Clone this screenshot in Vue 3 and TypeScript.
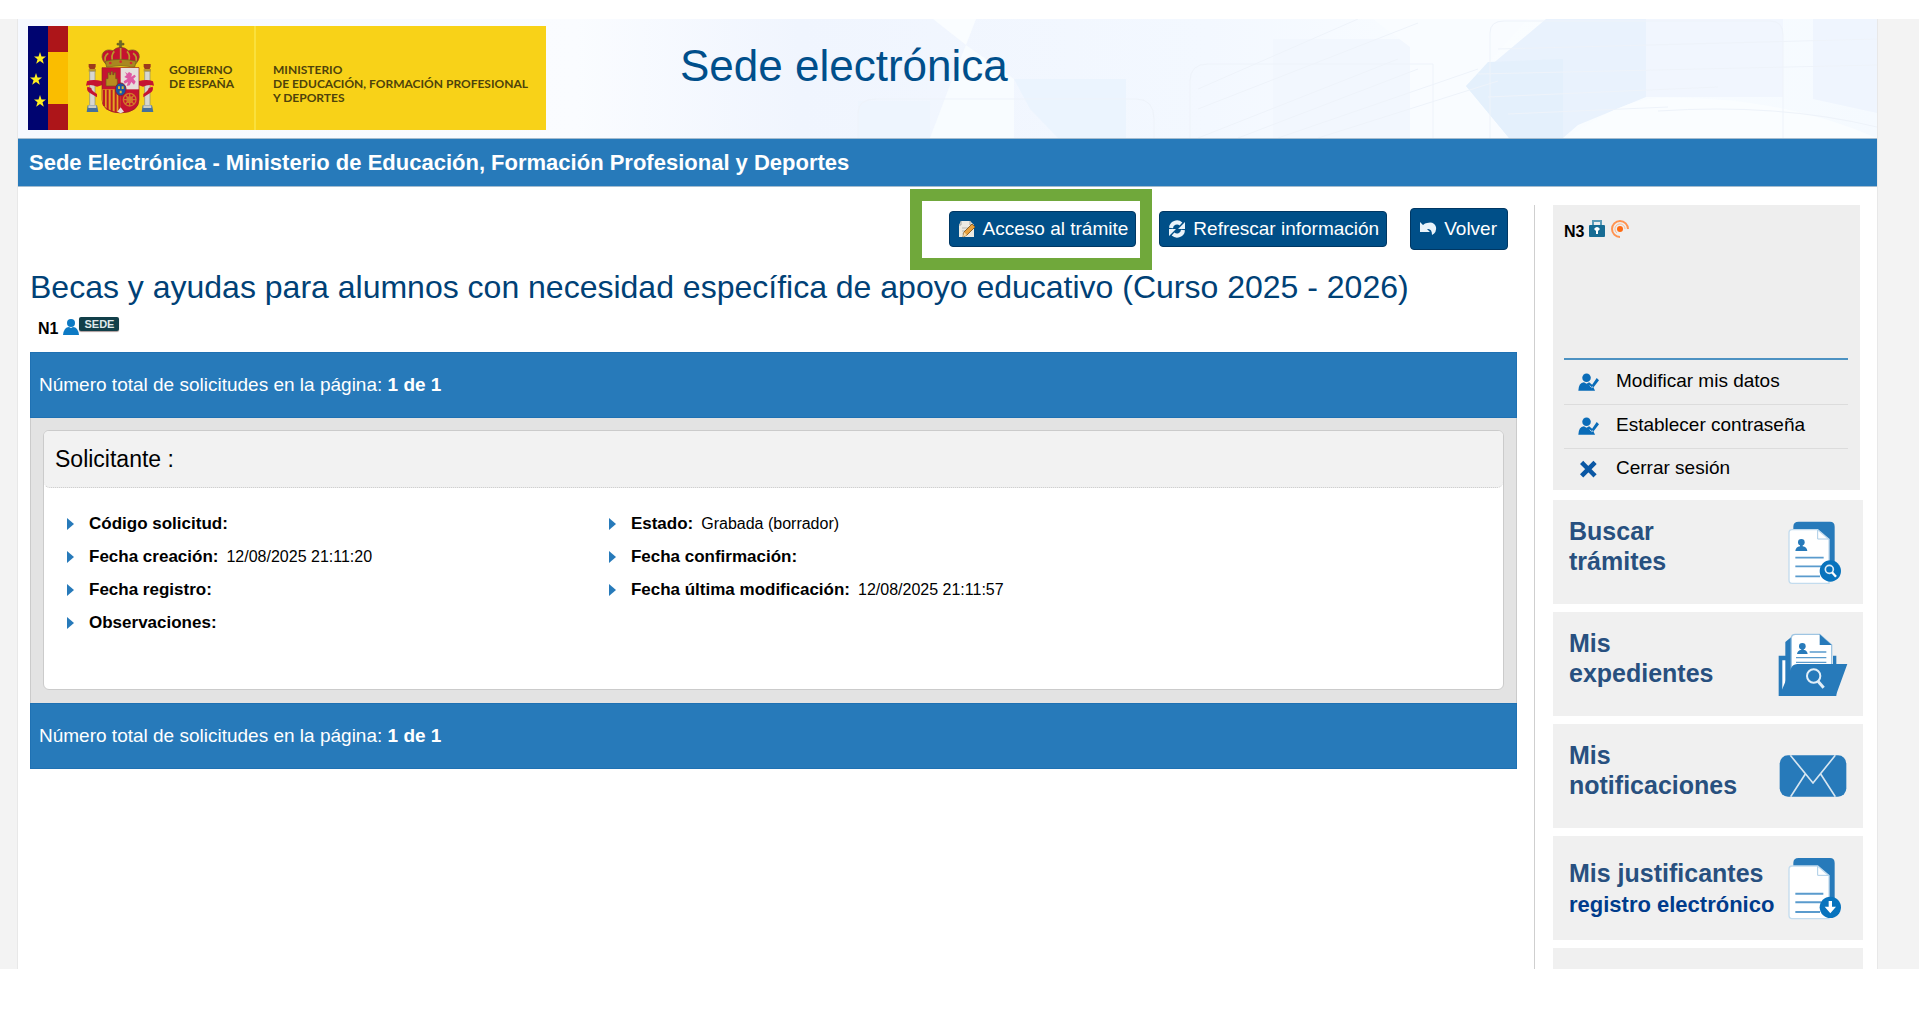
<script setup lang="ts">
interface Field {
  label: string
  value?: string
}

const leftFields: Field[] = [
  { label: 'Código solicitud:' },
  { label: 'Fecha creación:', value: '12/08/2025 21:11:20' },
  { label: 'Fecha registro:' },
  { label: 'Observaciones:' },
]

const rightFields: Field[] = [
  { label: 'Estado:', value: 'Grabada (borrador)' },
  { label: 'Fecha confirmación:' },
  { label: 'Fecha última modificación:', value: '12/08/2025 21:11:57' },
]

const columns: Field[][] = [leftFields, rightFields]

const account = [
  { text: 'Modificar mis datos', icon: 'user' },
  { text: 'Establecer contraseña', icon: 'user' },
  { text: 'Cerrar sesión', icon: 'close' },
]

const page = 1
const pages = 1
</script>

<template>
  <div class="page">
    <div class="backdrop">
      <div class="shell">
        <header class="banner">
          <svg class="banner-art" viewBox="0 0 1859 119" preserveAspectRatio="none" aria-hidden="true">
            <defs>
              <linearGradient id="wash" x1="0" x2="1" y1="0" y2="0">
                <stop offset="0" stop-color="#f6f9ff" />
                <stop offset="0.3" stop-color="#fafcff" />
                <stop offset="0.42" stop-color="#f0f5fe" />
                <stop offset="0.64" stop-color="#f3f8ff" />
                <stop offset="0.8" stop-color="#fafdff" />
                <stop offset="1" stop-color="#f5faff" />
              </linearGradient>
            </defs>
            <rect width="1859" height="119" fill="url(#wash)" />
            <path d="M915 0H958L948 26Z" fill="#fafdff" />
            <path d="M948 26L996 60V119H912L932 66Z" fill="#f8fcff" />
            <path d="M996 60H1108V119H1040L1012 90Z" fill="#ebf4fe" />
            <path d="M840 82H912V119H840Z" fill="#eef5fe" />
            <path d="M1255 20H1392V119H1255Z" fill="#f2f7fe" />
            <path d="M1355 0H1510L1448 68L1490 119H1392V28Z" fill="#f9fcff" />
            <path d="M1528 0H1628V78L1560 106L1545 119H1491L1448 67Z" fill="#e9f2fd" />
            <path d="M1448 67L1470 43L1545 40V119H1491Z" fill="#e4f0fc" />
            <path d="M1628 0H1765V78H1628Z" fill="#f1f6fe" />
            <path d="M1550 119Q1600 82 1640 79Q1760 76 1859 119Z" fill="#fafdff" />
            <path d="M1795 0H1859V94L1795 80Z" fill="#eff5fe" />
            <g fill="none" stroke="#eef3fa">
              <path d="M840 119V94Q840 80 858 80H1118Q1136 80 1136 100V119" />
              <path d="M1172 119V62Q1172 45 1190 45H1415V119" />
              <path d="M1472 119V14Q1472 2 1486 2H1752Q1765 2 1765 16V119" />
              <path d="M1180 119L1380 40M1220 119L1400 50M1260 119L1460 50M1300 119L1480 62M1180 90L1400 4M1180 70L1340 0" />
              <path d="M1480 30L1859 20M1460 55L1859 46M1470 78L1700 68M1490 95L1650 88M1640 92Q1760 84 1859 108" />
            </g>
          </svg>

          <div class="logo">
            <svg class="flags" viewBox="0 0 40 104" role="img" aria-label="Unión Europea y España">
              <rect width="20" height="104" fill="#000470" />
              <rect x="20" width="20" height="104" fill="#ad1519" />
              <rect x="20" y="26" width="20" height="52" fill="#fabd00" />
              <g fill="#ffef20">
                <path id="star" d="M12 26L13.500 30.500H18L14.500 33.300L15.800 37.800L12 35L8.200 37.800L9.500 33.300L6 30.500H10.500Z" />
                <use href="#star" x="-4" y="21" />
                <use href="#star" y="43" />
              </g>
            </svg>
            <div class="government">
              <svg class="arms" viewBox="28 26 207 222" role="img" aria-label="Escudo de España">
                <g stroke="#6d5a1c" stroke-width="2">
                  <path d="M131 28h7v8h7v5h-7v9h-7v-9h-7v-5h7Z" fill="#6a6a2c" />
                  <path d="M88 96Q72 76 84 62Q94 52 112 58Q122 48 135 48Q148 48 158 58Q176 52 186 62Q198 76 182 96Z" fill="#c4122f" />
                  <path d="M90 94Q84 74 98 66M112 92Q104 72 116 60M158 92Q166 72 154 60M180 94Q186 74 172 66M135 92V50" fill="none" stroke="#b8982c" stroke-width="5" />
                  <path d="M88 90Q135 78 182 90L177 107Q135 99 93 107Z" fill="#a88720" />
                </g>
                <g fill="#d8282f"><circle cx="104" cy="95" r="4" /><circle cx="135" cy="91" r="4" /><circle cx="166" cy="95" r="4" /></g>
                <g id="pillar">
                  <path d="M39 98h21v8l-3 7H42l-3-7Z" fill="#9c3b1c" />
                  <path d="M39 113h22v8H39Z" fill="#b9982d" />
                  <path d="M42 120h16v104H42Z" fill="#d7d7d0" stroke="#8d8b72" stroke-width="2" />
                  <path d="M36 222h28l4 20H33Z" fill="#46709c" />
                  <path d="M38 222h24v8H38Z" fill="#ccccc4" />
                </g>
                <use href="#pillar" x="165" />
                <path d="M80 150Q52 142 34 150L31 163Q48 158 64 166L82 160ZM35 166Q31 178 44 186L64 198V188Q46 178 47 170Z" fill="#c51331" />
                <path d="M187 150Q215 142 232 150L235 163Q218 158 202 166L186 160ZM231 166Q235 178 222 186L203 198V188Q219 178 219 170Z" fill="#c51331" />
                <path d="M79 109H190V205Q190 242 135 245Q79 242 79 205Z" fill="#c51331" stroke="#8a2922" stroke-width="2" />
                <path d="M135 110H189V174H135Z" fill="#e6dfdc" />
                <path d="M80 174H134V243Q80 238 80 205Z" fill="#e3a521" />
                <path d="M85 175V224M96 175V235M108 175V240M120 175V243M131 175V244" stroke="#bd1c24" stroke-width="6" />
                <path d="M91 164V142h6v-18h5v6h4v-9h5v9h4v-6h5v18h5v22Z" fill="#b98c1e" stroke="#70571c" stroke-width="2" />
                <path d="M148 121l7 6 5-5 9 5-2 10 9-7 5 5-8 7 7 9-5 9-8-8-5 10-9 2 4-12-10 5-3-7 12-8-10-5 7-6Z" fill="#df58a1" />
                <g fill="none" stroke="#d17a28" stroke-width="4">
                  <circle cx="162" cy="205" r="19" />
                  <circle cx="162" cy="205" r="8" />
                  <path d="M143 205h38M162 186v38M149 192l26 26M175 192l-26 26" />
                </g>
                <path d="M125 241l10-13 10 13-10 5Z" fill="#e7dedc" />
                <ellipse cx="135" cy="174" rx="16" ry="19" fill="#1a55a3" stroke="#8d1f30" stroke-width="3" />
                <path d="M127 165h6v8h-6ZM138 165h6v8h-6ZM132 178h6v8h-6Z" fill="#d6ba37" />
              </svg>
              <span>GOBIERNO<br />DE ESPAÑA</span>
            </div>
            <div class="ministry">MINISTERIO<br />DE EDUCACIÓN, FORMACIÓN PROFESIONAL<br />Y DEPORTES</div>
          </div>
          <div class="site-title">Sede electrónica</div>
        </header>

        <div class="site-bar">Sede Electrónica - Ministerio de Educación, Formación Profesional y Deportes</div>

        <div class="content">
          <main>
            <div class="toolbar">
              <div class="highlighted">
                <button type="button">
                  <svg viewBox="0 0 18 18" aria-hidden="true">
                    <path d="M3 1h9l4 4v12H1V5Z" fill="#eceae2" />
                    <path d="M3 1v4H1M12 1v4h4" fill="none" stroke="#a8a9a2" />
                    <path d="M4 8h6M4 11h4M4 14h3" stroke="#b7b8b2" />
                    <path d="M14 4l3 3-8 8-4 2 1-5Z" fill="#e9a13b" stroke="#8f6428" stroke-width="1" />
                    <path d="M6 12l3 3-4 2Z" fill="#f6d9a7" />
                  </svg>
                  Acceso al trámite
                </button>
              </div>
              <button type="button">
                <svg viewBox="0 0 18 18" aria-hidden="true">
                  <path d="M3 8A6 6 0 0 1 13 4M15 10A6 6 0 0 1 5 14" fill="none" stroke="#e9f3fa" stroke-width="4" />
                  <path d="M17 2v7h-7ZM1 16V9h7Z" fill="#e9f3fa" />
                </svg>
                Refrescar información
              </button>
              <button type="button" class="back">
                <svg viewBox="0 0 18 18" aria-hidden="true">
                  <path d="M1 2v10h10L8 9Q13 8 13 15Q18 12 17 7Q15 1 8 3Q6 3 4 5Z" fill="#e9f3fa" />
                </svg>
                Volver
              </button>
            </div>

            <h1>Becas y ayudas para alumnos con necesidad específica de apoyo educativo (Curso 2025 - 2026)</h1>
            <div class="access">
              <span class="level">N1</span>
              <svg viewBox="0 0 16 17" aria-hidden="true">
                <circle cx="8" cy="5" r="4" fill="#0d7ac4" />
                <path d="M0 17Q1 9 6 9L8 10L10 9Q15 9 16 17Z" fill="#0d7ac4" />
              </svg>
              <span class="badge">SEDE</span>
            </div>

            <div class="count">Número total de solicitudes en la página: <b>{{ page }} de {{ pages }}</b></div>
            <div class="panel">
              <section class="card">
                <h2>Solicitante :</h2>
                <div class="fields">
                  <ul v-for="(column, i) in columns" :key="i">
                    <li v-for="field in column" :key="field.label">
                      <b>{{ field.label }}</b>
                      <span v-if="field.value">{{ field.value }}</span>
                    </li>
                  </ul>
                </div>
              </section>
            </div>
            <div class="count">Número total de solicitudes en la página: <b>{{ page }} de {{ pages }}</b></div>
          </main>

          <aside>
            <div class="account">
              <div class="session">
                <span class="level">N3</span>
                <svg class="lock" viewBox="0 0 16 17" aria-hidden="true">
                  <path d="M4 7V1h8v6" fill="none" stroke="#5c9cb8" stroke-width="2" />
                  <rect y="5" width="16" height="12" rx="1" fill="#176c94" />
                  <path d="M5 9Q8 5 11 9L9 11V14H7V11Z" fill="#fff" />
                </svg>
                <svg class="signal" viewBox="0 0 18 18" aria-hidden="true">
                  <path d="M9 17A8 8 0 1 1 17 9" fill="none" stroke="#ff9350" stroke-width="2" />
                  <path d="M6 13A5 5 0 1 1 14 9" fill="none" stroke="#ffb88a" />
                  <circle cx="9" cy="9" r="3" fill="#ff6a10" />
                </svg>
              </div>
              <nav aria-label="Mi cuenta">
                <a v-for="item in account" :key="item.text" href="#">
                  <svg v-if="item.icon === 'user'" viewBox="234 548 64 54" aria-hidden="true">
                    <circle cx="260" cy="562" r="13" fill="#0a6cb8" />
                    <path d="M235 602Q236 577 252 576L260 580L268 576L277 583L291 563L298 570L281 592L286 602Z" fill="#0a6cb8" />
                    <path d="M270 586l6 6 4-3" fill="none" stroke="#d3e5f2" stroke-width="3" />
                  </svg>
                  <svg v-else viewBox="234 810 64 54" aria-hidden="true">
                    <path d="M250 822L281 853M281 822L250 853" stroke="#0a57a4" stroke-width="14" stroke-linecap="square" />
                  </svg>
                  {{ item.text }}
                </a>
              </nav>
            </div>

            <a class="tile" href="#">
              <span>Buscar<br />trámites</span>
              <svg class="doc" viewBox="864 123 162 192" aria-hidden="true">
                <path d="M880 150V140Q880 125 896 125H990Q1004 125 1004 140V280H960V160Z" fill="#277aba" />
                <path d="M876 149H953L987 178V310H876Q867 310 867 300V159Q867 149 876 149Z" fill="#fff" stroke="#c3dcee" stroke-width="4" />
                <path d="M953 150V177H986" fill="none" stroke="#aacce6" stroke-width="3" />
                <circle cx="904" cy="187" r="10" fill="#277aba" />
                <path d="M886 213Q887 201 900 199V193H908V199Q921 201 922 213Z" fill="#277aba" />
                <path d="M886 233H971M886 259H964M886 289H960" stroke="#5a9bcd" stroke-width="5" />
                <circle cx="991" cy="273" r="32" fill="#0873bd" />
                <circle cx="988" cy="268" r="12" fill="none" stroke="#dcecf7" stroke-width="5" />
                <path d="M996 277L1008 290" stroke="#fff" stroke-width="7" />
              </svg>
            </a>
            <a class="tile" href="#">
              <span>Mis<br />expedientes</span>
              <svg class="folder" viewBox="835 457 210 192" aria-hidden="true">
                <path d="M837 525H857V484L876 468V560H1000V525H1010V646H837Z" fill="#277aba" />
                <path d="M848 539H857V612L848 632Z" fill="#fff" />
                <path d="M875 566V472Q875 461 888 461H960L996 493V558H880Z" fill="#fff" stroke="#9fc5e2" stroke-width="4" />
                <path d="M960 461L996 493H960Z" fill="#277aba" />
                <circle cx="908" cy="497" r="10" fill="#277aba" />
                <path d="M892 520Q893 509 905 507V502H912V507Q923 509 924 520Z" fill="#277aba" />
                <path d="M930 514H980M889 531H980M889 545H980" stroke="#5a9bcd" stroke-width="4" />
                <path d="M893 550H1043L1008 646H839L872 568Q877 550 893 550Z" fill="#277aba" />
                <circle cx="942" cy="586" r="20" fill="none" stroke="#e3eff8" stroke-width="6" />
                <path d="M955 602L972 621" stroke="#e3eff8" stroke-width="9" />
              </svg>
            </a>
            <a class="tile" href="#">
              <span>Mis<br />notificaciones</span>
              <svg class="mail" viewBox="836 106 202 126" aria-hidden="true">
                <rect x="837" y="107" width="200" height="124" rx="25" fill="#277aba" />
                <path d="M869 107L937 190L1004 107M914 163L870 231M960 163L1004 231" fill="none" stroke="#d7e6f1" stroke-width="5" />
              </svg>
            </a>
            <a class="tile receipts" href="#">
              <span>Mis justificantes<br /><small>registro electrónico</small></span>
              <svg class="doc" viewBox="864 416 162 192" aria-hidden="true">
                <path d="M880 444V434Q880 419 896 419H990Q1004 419 1004 434V570H960V454Z" fill="#277aba" />
                <path d="M876 443H953L987 472V601H876Q867 601 867 591V453Q867 443 876 443Z" fill="#fff" stroke="#c3dcee" stroke-width="4" />
                <path d="M953 444V471H986" fill="none" stroke="#aacce6" stroke-width="3" />
                <path d="M886 526H970M886 552H964M886 581H960" stroke="#5a9bcd" stroke-width="6" />
                <circle cx="991" cy="567" r="32" fill="#0873bd" />
                <path d="M986 548H996V565H1008L991 585L974 565H986Z" fill="#fff" />
              </svg>
            </a>
            <div class="tile"></div>
          </aside>
        </div>
      </div>
    </div>
  </div>
</template>

<style>
body {
  margin: 0;
  background: #fff;
}
</style>

<style scoped>
.page {
  box-sizing: border-box;
  height: 100vh;
  padding: 19px 0 48px;
  font-family: Arial, "Liberation Sans", sans-serif;
  font-size: 19px;
  color: #000;
}

.page *,
.page *::before {
  box-sizing: border-box;
}

.backdrop {
  height: 100%;
  overflow: hidden;
  padding: 0 41px 0 17px;
  background: #f3f3f3;
}

.shell {
  min-height: 100%;
  border: solid #e8e8e8;
  border-width: 0 1px;
  background: #fff;
}

.banner {
  position: relative;
  display: flex;
  align-items: flex-start;
  height: 119px;
  padding: 7px 10px 0;
}

.banner-art {
  position: absolute;
  inset: 0;
  width: 100%;
  height: 100%;
}

.logo {
  position: relative;
  display: flex;
  flex: none;
  width: 518px;
  height: 104px;
  background: #f8d218;
  font-family: Lato, sans-serif;
  font-size: 12px;
  font-weight: 700;
  line-height: 14px;
  color: #4e430b;
  white-space: nowrap;
}

.flags {
  width: 40px;
  height: 104px;
}

.government {
  display: flex;
  align-items: flex-start;
  gap: 15px;
  width: 188px;
  padding: 14px 0 0 17px;
  border-right: 2px solid #fae03c;
}

.government span {
  padding-top: 23px;
}

.arms {
  width: 69px;
  height: 74px;
}

.ministry {
  padding: 37px 0 0 17px;
}

.site-title {
  position: relative;
  margin-left: 134px;
  padding-top: 15px;
  font-size: 44px;
  line-height: 50px;
  color: #004f8b;
}

.site-bar {
  height: 49px;
  padding-left: 11px;
  border: solid #a4bccf;
  border-width: 1px 0;
  background: #277aba;
  font-size: 22px;
  font-weight: 700;
  line-height: 47px;
  color: #fff;
}

.content {
  display: flex;
  padding: 0 14px 0 12px;
}

main {
  flex: 1;
  min-width: 0;
}

.toolbar {
  display: flex;
  align-items: center;
  justify-content: flex-end;
  gap: 23px;
  padding: 21px 9px 0 0;
}

button {
  display: flex;
  align-items: center;
  gap: 7px;
  height: 36px;
  padding: 0 7px 0 8px;
  border: 1px solid #003763;
  border-radius: 4px;
  background: #004f88;
  font-family: inherit;
  font-size: 19px;
  line-height: 24px;
  color: #fff;
  white-space: nowrap;
}

button svg {
  width: 18px;
  height: 18px;
}

.back {
  height: 42px;
  padding-right: 10px;
}

.highlighted {
  position: relative;
}

.highlighted::before {
  content: "";
  position: absolute;
  inset: -22px -16px -23px -39px;
  border: 12px solid #70a83b;
  pointer-events: none;
}

h1 {
  margin: 17px 0 0;
  font-size: 32px;
  font-weight: 400;
  line-height: 40px;
  color: #004176;
}

.access {
  display: flex;
  align-items: flex-start;
  height: 18px;
  margin: 10px 0 17px;
  padding-left: 8px;
}

.level {
  margin-right: 5px;
  font-size: 16px;
  font-weight: 700;
  line-height: 24px;
}

.access svg {
  width: 16px;
  height: 17px;
  margin-top: 1px;
}

.badge {
  height: 14px;
  padding: 0 5px;
  border-radius: 2px;
  background: #123f49;
  font-size: 11px;
  font-weight: 700;
  line-height: 14px;
  color: #dfe8ea;
  box-shadow: 0 1px 1px #a99;
}

.count {
  height: 66px;
  padding-left: 8px;
  border: 1px solid #1f71b3;
  background: #277aba;
  line-height: 64px;
  color: #fff;
}

.panel {
  padding: 12px 12px 13px;
  border: solid #cbcbcb;
  border-width: 0 1px;
  background: #e3e3e3;
}

.card {
  overflow: hidden;
  border: 1px solid #cbcbcb;
  border-radius: 6px;
  background: #fff;
}

h2 {
  margin: 0;
  padding-left: 11px;
  border-bottom: 1px dotted #c8c8c8;
  border-radius: 0 0 6px 6px;
  background: #f2f2f2;
  font-size: 23px;
  font-weight: 400;
  line-height: 56px;
}

.fields {
  display: grid;
  grid-template-columns: 20fr 33fr;
  padding: 19px 0 50px 23px;
}

ul {
  margin: 0;
  padding: 0;
  list-style: none;
}

li {
  display: flex;
  align-items: center;
  gap: 8px;
  font-size: 16px;
  line-height: 33px;
}

li b {
  font-size: 17px;
}

li::before {
  content: "";
  width: 0;
  margin-right: 7px;
  border: solid transparent;
  border-width: 6px 0 6px 7px;
  border-left-color: #277aba;
}

aside {
  display: flex;
  flex-direction: column;
  gap: 8px;
  width: 329px;
  margin: 18px 0 0 17px;
  padding-left: 18px;
  border-left: 1px solid #cfcfcf;
}

.account {
  margin: 0 3px 2px 0;
  padding: 0 12px 0 11px;
  background: #eee;
}

.session {
  display: flex;
  align-items: flex-start;
  height: 153px;
  padding-top: 15px;
}

.lock {
  width: 16px;
  height: 17px;
}

.signal {
  width: 18px;
  height: 18px;
  margin-left: 6px;
}

nav {
  border-top: 2px solid #4d92c2;
}

nav a {
  display: flex;
  align-items: center;
  gap: 17px;
  height: 44px;
  padding: 0 0 3px 14px;
  color: #000;
  text-decoration: none;
}

nav a + a {
  border-top: 1px solid #dcdcdc;
}

nav a:last-child {
  height: 42px;
}

nav a svg {
  width: 21px;
  height: 18px;
  margin-top: 2px;
}

.tile {
  display: flex;
  justify-content: space-between;
  flex: none;
  height: 104px;
  padding: 16px 15px 0 16px;
  background: #f0f0f0;
  font-size: 25px;
  font-weight: 700;
  line-height: 30px;
  color: #28507f;
  text-decoration: none;
  white-space: nowrap;
}

.receipts span {
  padding-top: 6px;
}

small {
  font-size: 22px;
  color: #003c8c;
}

.doc {
  width: 54px;
  height: 64px;
  margin: 5px 6px 0 0;
}

.folder {
  width: 70px;
  height: 64px;
  margin-top: 5px;
}

.mail {
  width: 68px;
  height: 42px;
  margin: 15px 1px 0 0;
}
</style>
